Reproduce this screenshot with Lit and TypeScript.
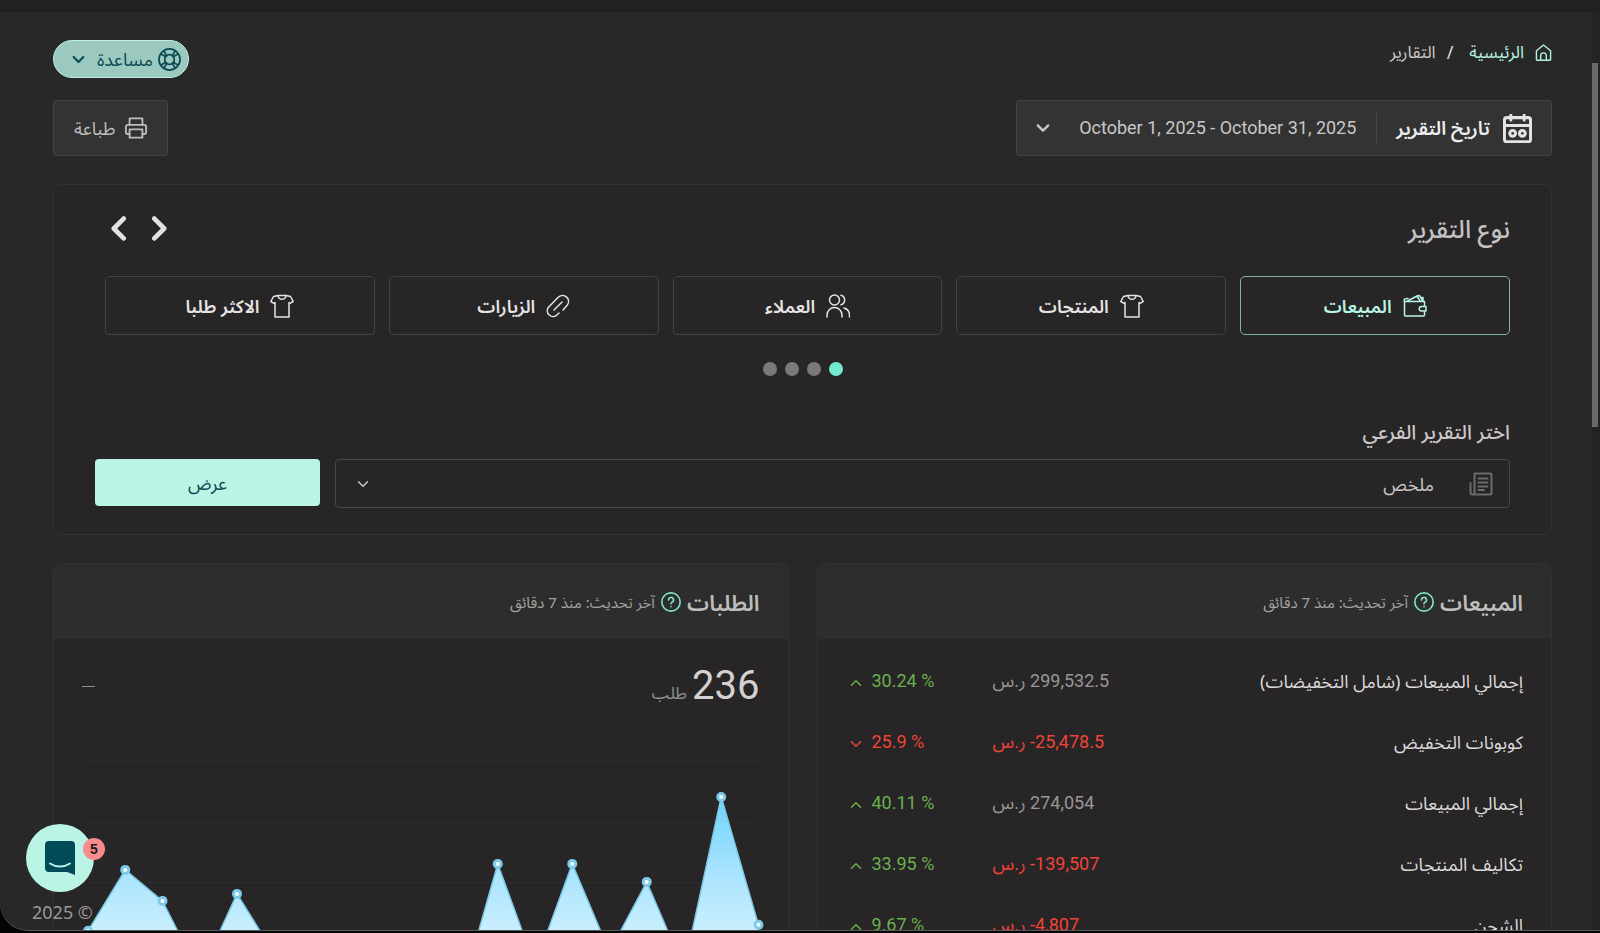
import { LitElement, html, css, svg } from "lit";
import { customElement, state } from "lit/decorators.js";
import { classMap } from "lit/directives/class-map.js";

const stroked = (size: number, width: number, body: unknown, cls = "icon") => html`
  <svg class=${cls} width=${size} height=${size} viewBox="0 0 24 24" fill="none" stroke="currentColor"
    stroke-width=${width} stroke-linecap="round" stroke-linejoin="round" aria-hidden="true">${body}</svg>`;

const glyph = {
  home: svg`<path d="M2 22V9.500L12 1.500l10 8V22a1 1 0 0 1-1 1H3a1 1 0 0 1-1-1Z"/><path d="M8 23v-6.500a4 4 0 0 1 8 0V23"/>`,
  buoy: svg`<circle cx="12" cy="12" r="11"/><circle cx="12" cy="12" r="5"/>
    <path d="M3.200 6.200l5 3M6.200 3.200l3 5M17.800 3.200l-3 5M20.800 6.200l-5 3M3.200 17.800l5-3M6.200 20.800l3-5M17.800 20.800l-3-5M20.800 17.800l-5-3"/>`,
  printer: svg`<path d="M5 8.500V1.500h14v7"/><path d="M5 18.500H3a2 2 0 0 1-2-2v-6a2 2 0 0 1 2-2h18a2 2 0 0 1 2 2v6a2 2 0 0 1-2 2h-2"/><path d="M5 13.500h14v9H5z"/>`,
  calendar: svg`<rect x="1.200" y="3" width="21.600" height="20" rx="2"/><path d="M1.500 9.500h21M6.500 1v4M17.500 1v4"/>
    <circle cx="8" cy="16" r="2.400"/><circle cx="16" cy="16" r="2.400"/>`,
  wallet: svg`<path d="M21.500 12V7.500h-20V21a1 1 0 0 0 1 1h18a1 1 0 0 0 1-1v-3.500"/>
    <path d="M18.500 12.500H23v4.500h-4.500a2.200 2.200 0 0 1 0-4.500Z"/><path d="M1.500 7.500c-1-3 1-3 3.500-3M4.500 7l9.500-5 3 5M13.500 2.200l3-.7L19.500 7M17.500 3.500h2.500V7"/>`,
  shirt: svg`<path d="M8 1.500L3.500 2.500 .8 7.500l3.200 1.800 1-.8V23h14V8.500l1 .8 3.200-1.800-2.700-5L16 1.500Z"/><path d="M8 1.500c.5 5 7.500 5 8 0"/>`,
  users: svg`<circle cx="8.500" cy="6" r="5"/><path d="M1 23v-2a7.500 7.500 0 0 1 15 0v2M15 1.200a5 5 0 0 1 0 9.600M18 14a7.500 7.500 0 0 1 5.500 7v2"/>`,
  clip: svg`<path d="M8 16l8-8"/><path d="M13 19l-2.500 2.300a5.700 5.700 0 0 1-8-8L12.500 3a6 6 0 0 1 8.700 8.200L17 16"/>`,
  doc: svg`<path d="M5.500 1.500H21a1.500 1.500 0 0 1 1.500 1.500v18a1.500 1.500 0 0 1-1.500 1.500H3.500a2 2 0 0 1-2-2V11M5.500 1.500V20a2 2 0 0 1-2 2.500"/><path d="M9.500 6.500h9M9.500 10.500h9M9.500 14.500h9M9.500 18h5.500"/>`,
  question: svg`<circle cx="12" cy="12" r="11"/><path d="M9 9.500a3 3 0 1 1 4.200 2.800c-.8.400-1.200.9-1.200 1.900M12 17.600v.1"/>`,
  down: svg`<path d="M3 7.500l9 9 9-9"/>`,
  up: svg`<path d="M3 16.500l9-9 9 9"/>`,
  left: svg`<path d="M17 2.500L7.500 12l9.500 9.500"/>`,
  right: svg`<path d="M7 2.500l9.500 9.500L7 21.500"/>`,
};

const REPORTS = [
  { label: "المبيعات", icon: glyph.wallet },
  { label: "المنتجات", icon: glyph.shirt },
  { label: "العملاء", icon: glyph.users },
  { label: "الزيارات", icon: glyph.clip },
  { label: "الاكثر طلبا", icon: glyph.shirt },
];

const SALES = [
  { label: "إجمالي المبيعات (شامل التخفيضات)", value: "299,532.5", change: "30.24", up: true },
  { label: "كوبونات التخفيض", value: "-25,478.5", change: "25.9", up: false },
  { label: "إجمالي المبيعات", value: "274,054", change: "40.11", up: true },
  { label: "تكاليف المنتجات", value: "-139,507", change: "33.95", up: true },
  { label: "الشحن", value: "-4,807", change: "9.67", up: true },
];

/* Plot heights of the daily orders, first day on the left. */
const ORDERS = [186, 125, 156, 230, 149, 209, 240, 240, 240, 240, 250, 119, 221, 119, 207, 137, 224, 52, 180];
const PLOT_START = 6;
const PLOT_END = 677;

@customElement("orders-chart")
class OrdersChart extends LitElement {
  static styles = css`
    :host { display: block; direction: ltr; }
    svg { display: block; width: 100%; height: auto; overflow: visible; }
    .grid { stroke: #302e2f; }
    .area { fill: url(#sky); }
    .line { fill: none; stroke: #7cc8e4; stroke-width: 1.5; }
    .dot { fill: #fff; stroke: #7ccbec; stroke-width: 3; }
  `;
  render() {
    const step = (PLOT_END - PLOT_START) / (ORDERS.length - 1);
    const pts = ORDERS.map((y, i) => [PLOT_START + i * step, y]);
    const path = pts.map((p) => p.join(",")).join(" ");
    return html`<svg viewBox="0 0 678 260" role="img" aria-label="الطلبات">
      <defs><linearGradient id="sky" gradientUnits="userSpaceOnUse" x1="0" y1="52" x2="0" y2="190">
        <stop offset="0" stop-color="#6fd3fd"/><stop offset="0.600" stop-color="#ade5fe"/><stop offset="1" stop-color="#ccf0fe"/>
      </linearGradient></defs>
      ${[16, 77, 138, 199].map((y) => svg`<line class="grid" x1=${PLOT_START} x2="678" y1=${y} y2=${y}/>`)}
      <polygon class="area" points=${`${PLOT_START},260 ${path} ${PLOT_END},260`}/>
      <polyline class="line" points=${path}/>
      ${pts.map(([x, y]) => svg`<circle class="dot" cx=${x} cy=${y} r="3.500"/>`)}
    </svg>`;
  }
}

@customElement("app-root")
class AppRoot extends LitElement {
  @state() private active = 0;

  static styles = css`
    :host {
      display: block; height: 100vh; overflow: hidden; background: #050505; color: #c9c7c7;
      font: 400 18px/28px "Noto Sans", "Noto Sans Arabic", "DejaVu Sans", sans-serif;
    }
    *, *::before { box-sizing: border-box; }
    button, select { font: inherit; color: inherit; cursor: pointer; }
    h2, h3, p, ol { margin: 0; padding: 0; font-weight: inherit; list-style: none; }
    svg { flex: none; display: block; }

    .window {
      position: relative; display: flex; flex-direction: column; height: calc(100vh - 2px); overflow: hidden;
      background: #282828; border-bottom: 1px solid #5a5a5a; border-bottom-left-radius: 28px;
    }
    .strip { flex: none; height: 12px; background: #212121; }
    .body { flex: 1; min-height: 0; display: flex; }
    .track { flex: none; width: 8px; padding-top: 51px; background: #232323; }
    .thumb { width: 6px; height: 42%; margin-right: 2px; background: #696969; }
    main { flex: 1; min-width: 0; padding: 28px 40px 0 53px; overflow: hidden; }

    .head { display: flex; justify-content: space-between; align-items: flex-start; margin-bottom: 22px; }
    .crumbs { display: flex; align-items: center; gap: 11px; height: 24px; font-size: 17px; line-height: 24px; }
    .crumbs li { display: flex; align-items: center; gap: 11px; }
    .crumbs li + li::before { content: "/"; padding-right: 5px; color: #dcdcdc; font-size: 18px; }
    .crumbs a { display: flex; align-items: center; gap: 11px; color: #b5f2e2; text-decoration: none; }
    .help {
      display: flex; align-items: center; gap: 5px; height: 38px; padding: 0 7px 0 18px;
      border: 1px solid #b9f0e2; border-radius: 19px; background: #9bc9bf; color: #0a4a54;
    }
    .help .chev { margin-right: 7px; }

    .tools { display: flex; justify-content: space-between; margin-bottom: 28px; }
    .box {
      display: flex; align-items: center; height: 56px; border: 1px solid #444; border-radius: 4px; background: #333;
    }
    .date { min-width: 536px; padding: 0 19px; }
    .date .icon { color: #e4e4e4; }
    .date strong { margin-right: 13px; color: #ededed; font-weight: 600; font-size: 19px; }
    .date .range { margin-right: 19px; padding-right: 20px; border-right: 1px solid #484848; line-height: 30px; }
    .date .chev { margin-right: auto; }
    .range, .value, .change, .total strong { font-family: Roboto, "Noto Sans Arabic", "DejaVu Sans", sans-serif; }
    .print { gap: 10px; padding: 0 20px; color: #bdbdbd; }

    .card { border: 1px solid #333132; border-radius: 8px; background: #272526; }
    .picker { padding: 27px 41px 26px; margin-bottom: 28px; }
    .picker-head { display: flex; justify-content: space-between; align-items: center; height: 32px; margin-bottom: 32px; }
    .picker-head h2 { font-size: 25px; line-height: 32px; font-weight: 500; color: #c4c1c2; }
    .arrows { display: flex; gap: 16px; padding-left: 11px; }
    .arrows button { padding: 0; border: 0; background: none; color: #e4e1e2; }
    .tabs { display: grid; grid-template-columns: repeat(5, 1fr); gap: 14px; padding-left: 10px; }
    .tab {
      display: flex; align-items: center; justify-content: center; gap: 11px; height: 59px;
      border: 1px solid #444243; border-radius: 5px; background: none; color: #e6e3e4; font-weight: 600;
    }
    .tab.on { border-color: #7fb5a8; color: #b9f6e6; }
    .dots { display: flex; justify-content: center; gap: 8px; margin: 27px 0 42px; }
    .dot { width: 14px; height: 14px; padding: 0; border: 0; border-radius: 50%; background: #7b797a; }
    .dot.on { background: #73ead0; }
    .sub-label { display: block; margin-bottom: 13px; font-size: 20px; font-weight: 500; }
    .sub { display: flex; align-items: flex-start; gap: 15px; }
    .select {
      flex: 1; display: flex; align-items: center; height: 49px; padding: 0 16px 0 21px;
      border: 1px solid #474546; border-radius: 4px;
    }
    .select .icon { color: #6d6b6c; }
    .select select { flex: 1; height: 47px; padding: 0 35px 0 0; border: 0; background: none; appearance: none; }
    .show { width: 225px; height: 47px; padding: 0; border: 0; border-radius: 4px; background: #b9f4e5; color: #0a4a54; }

    .pair { display: grid; grid-template-columns: 1fr 1fr; gap: 28px; }
    .card-head {
      display: flex; align-items: center; gap: 6px; height: 75px; padding: 0 28px;
      border-radius: 8px 8px 0 0; background: #2d2d2d; color: #a3a3a3; font-size: 15px;
    }
    .card-head h3 { font-size: 22px; font-weight: 600; color: #bdbdbd; }
    .card-head .icon { color: #7fe0c8; }
    .sales-body { padding: 11px 28px 40px 32px; }
    table { width: 100%; border-collapse: collapse; table-layout: fixed; }
    tr { height: 61px; }
    th, td { padding: 0; }
    th { text-align: right; font-weight: 400; color: #dcd9da; white-space: nowrap; }
    .value { width: 160px; text-align: left; color: #989697; white-space: nowrap; }
    .change { width: 143px; }
    .change span { display: flex; align-items: center; gap: 10px; direction: ltr; }
    .change .icon { margin-top: 4px; }
    .good { color: #6ab04c; }
    .value.bad, .bad { color: #f04438; }
    .orders-body { padding: 22px 28px 0; }
    .total { display: flex; align-items: center; justify-content: space-between; height: 50px; margin-bottom: 34px; color: #929091; font-size: 17px; }
    .total p { display: flex; align-items: baseline; gap: 5px; }
    .total strong { font-size: 40px; line-height: 50px; font-weight: 400; color: #d5d1d2; }
    .dash { width: 13px; height: 1px; background: #929091; }

    .copyright { position: absolute; left: 32px; bottom: 4px; direction: ltr; color: #999; }
    .chat {
      position: absolute; left: 26px; bottom: 38px; width: 68px; height: 68px; padding: 0;
      border: 0; border-radius: 50%; background: #b9f4e5;
    }
    .chat svg { margin: 0 auto; }
    .badge {
      position: absolute; top: 14px; right: -11px; width: 22px; height: 22px; border-radius: 50%;
      background: #f98b8d; color: #1c1c1c; font: 700 14px/22px "Liberation Sans", Arial, sans-serif;
    }
  `;

  private cardHead(title: string) {
    return html`<header class="card-head"><h3>${title}</h3>${stroked(20, 2, glyph.question)}<span>آخر تحديث: منذ 7 دقائق</span></header>`;
  }

  render() {
    return html`
      <div class="window" dir="rtl" lang="ar">
        <div class="strip"></div>
        <div class="body">
          <div class="track"><div class="thumb"></div></div>
          <main>
            <div class="head">
              <nav aria-label="مسار التنقل"><ol class="crumbs">
                <li><a href="#">${stroked(17, 2, glyph.home)}<span>الرئيسية</span></a></li>
                <li>التقارير</li>
              </ol></nav>
              <button class="help">${stroked(23, 1.8, glyph.buoy)}<span>مساعدة</span>${stroked(13, 4, glyph.down, "chev")}</button>
            </div>

            <div class="tools">
              <button class="box date">
                ${stroked(29, 2.5, glyph.calendar)}<strong>تاريخ التقرير</strong>
                <span class="range" dir="ltr">October 1, 2025 - October 31, 2025</span>
                ${stroked(14, 4, glyph.down, "chev")}
              </button>
              <button class="box print">${stroked(22, 2, glyph.printer)}<span>طباعة</span></button>
            </div>

            <section class="card picker">
              <div class="picker-head">
                <h2>نوع التقرير</h2>
                <div class="arrows">
                  <button aria-label="السابق">${stroked(25, 4.5, glyph.right)}</button>
                  <button aria-label="التالي">${stroked(25, 4.5, glyph.left)}</button>
                </div>
              </div>
              <div class="tabs">
                ${REPORTS.map((r, i) => html`
                  <button class=${classMap({ tab: true, on: i === this.active })} @click=${() => (this.active = i)}>
                    ${stroked(24, 1.5, r.icon)}<span>${r.label}</span>
                  </button>`)}
              </div>
              <div class="dots">
                ${[0, 1, 2, 3].map((i) => html`<button class=${classMap({ dot: true, on: i === 0 })} aria-label=${`صفحة ${i + 1}`}></button>`)}
              </div>
              <label class="sub-label" for="sub">اختر التقرير الفرعي</label>
              <div class="sub">
                <div class="select">
                  ${stroked(24, 2, glyph.doc)}
                  <select id="sub"><option>ملخص</option></select>
                  ${stroked(12, 3, glyph.down, "chev")}
                </div>
                <button class="show">عرض</button>
              </div>
            </section>

            <div class="pair">
              <section class="card">
                ${this.cardHead("المبيعات")}
                <div class="sales-body"><table>
                  <tbody>${SALES.map((s) => html`<tr>
                    <th scope="row">${s.label}</th>
                    <td class=${classMap({ value: true, bad: s.value.startsWith("-") })}><bdi dir="ltr">${s.value}</bdi> ر.س</td>
                    <td class="change"><span class=${s.up ? "good" : "bad"}>${stroked(12, 3, s.up ? glyph.up : glyph.down)}<bdi>${s.change} %</bdi></span></td>
                  </tr>`)}</tbody>
                </table></div>
              </section>
              <section class="card">
                ${this.cardHead("الطلبات")}
                <div class="orders-body">
                  <div class="total"><p><strong>236</strong><span>طلب</span></p><div class="dash"></div></div>
                  <orders-chart></orders-chart>
                </div>
              </section>
            </div>
          </main>
        </div>
        <div class="copyright">2025 ©</div>
        <button class="chat" aria-label="المحادثة">
          <svg width="30" height="36" viewBox="0 0 30 36" aria-hidden="true">
            <path fill="#004b57" d="M4 1h22a4 4 0 0 1 4 4v30l-8-3H4a4 4 0 0 1-4-4V5a4 4 0 0 1 4-4Z"/>
            <path d="M5 23.500c6 4 14 4 20 0" fill="none" stroke="#b9f4e5" stroke-width="2" stroke-linecap="round"/>
          </svg>
          <span class="badge">5</span>
        </button>
      </div>`;
  }
}
